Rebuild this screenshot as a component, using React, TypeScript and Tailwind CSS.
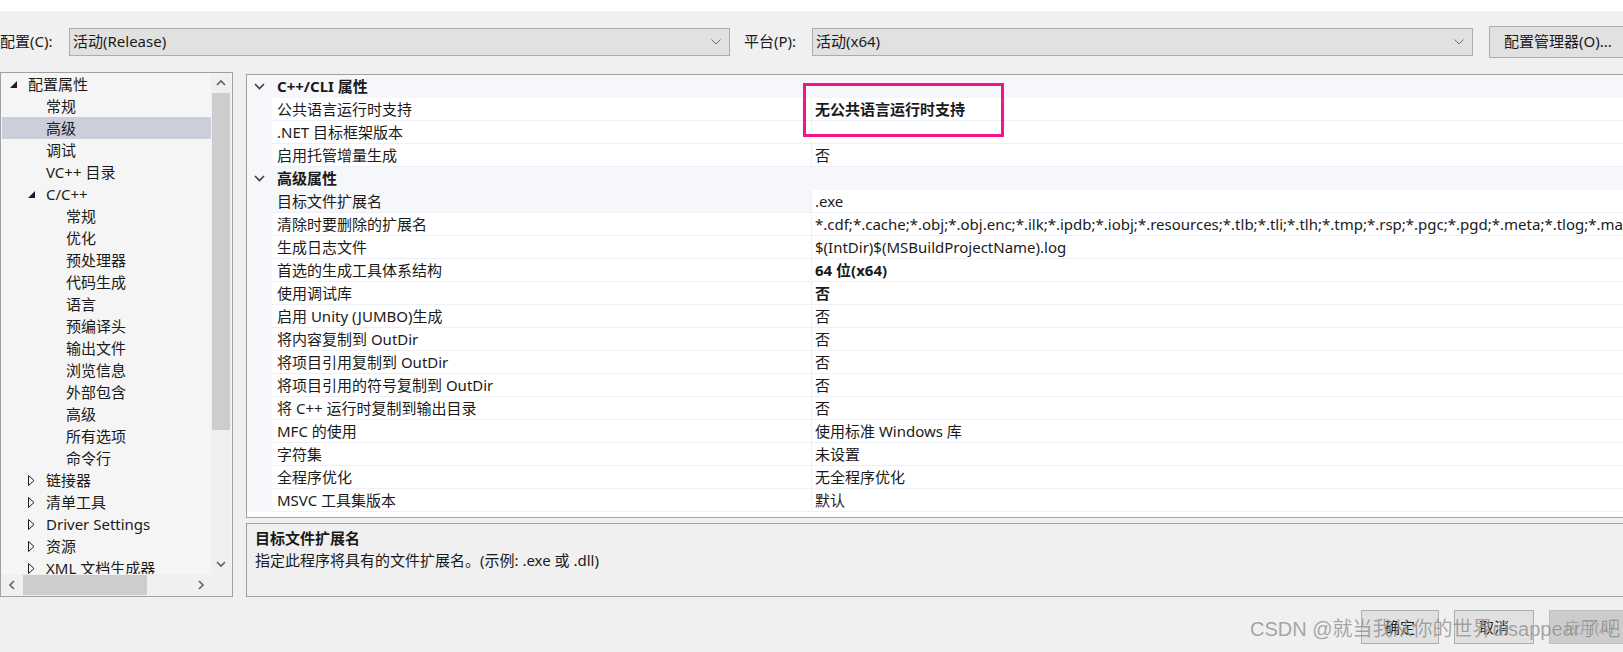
import React from 'react';

type TreeItem = {
  label: string;
  level: 0 | 1 | 2;
  toggle?: 'open' | 'closed';
  selected?: boolean;
};

const TREE: TreeItem[] = [
  { label: '配置属性', level: 0, toggle: 'open' },
  { label: '常规', level: 1 },
  { label: '高级', level: 1, selected: true },
  { label: '调试', level: 1 },
  { label: 'VC++ 目录', level: 1 },
  { label: 'C/C++', level: 1, toggle: 'open' },
  { label: '常规', level: 2 },
  { label: '优化', level: 2 },
  { label: '预处理器', level: 2 },
  { label: '代码生成', level: 2 },
  { label: '语言', level: 2 },
  { label: '预编译头', level: 2 },
  { label: '输出文件', level: 2 },
  { label: '浏览信息', level: 2 },
  { label: '外部包含', level: 2 },
  { label: '高级', level: 2 },
  { label: '所有选项', level: 2 },
  { label: '命令行', level: 2 },
  { label: '链接器', level: 1, toggle: 'closed' },
  { label: '清单工具', level: 1, toggle: 'closed' },
  { label: 'Driver Settings', level: 1, toggle: 'closed' },
  { label: '资源', level: 1, toggle: 'closed' },
  { label: 'XML 文档生成器', level: 1, toggle: 'closed' },
];

const INDENT = {
  0: 'pl-[8px]',
  1: 'pl-[26px]',
  2: 'pl-[46px]',
};

type GridRow =
  | { kind: 'header'; label: string }
  | { kind: 'prop'; name: string; value: string; bold?: boolean; selected?: boolean };

const ROWS: GridRow[] = [
  { kind: 'header', label: 'C++/CLI 属性' },
  { kind: 'prop', name: '公共语言运行时支持', value: '无公共语言运行时支持', bold: true },
  { kind: 'prop', name: '.NET 目标框架版本', value: '' },
  { kind: 'prop', name: '启用托管增量生成', value: '否' },
  { kind: 'header', label: '高级属性' },
  { kind: 'prop', name: '目标文件扩展名', value: '.exe', selected: true },
  {
    kind: 'prop',
    name: '清除时要删除的扩展名',
    value:
      '*.cdf;*.cache;*.obj;*.obj.enc;*.ilk;*.ipdb;*.iobj;*.resources;*.tlb;*.tli;*.tlh;*.tmp;*.rsp;*.pgc;*.pgd;*.meta;*.tlog;*.manifest;*.res;*.pch;*.exp;*.idb;*.rep;*.xdc;*.pdb;*_manifest.rc;*.bsc;*.sbr;*.xml',
  },
  { kind: 'prop', name: '生成日志文件', value: '$(IntDir)$(MSBuildProjectName).log' },
  { kind: 'prop', name: '首选的生成工具体系结构', value: '64 位(x64)', bold: true },
  { kind: 'prop', name: '使用调试库', value: '否', bold: true },
  { kind: 'prop', name: '启用 Unity (JUMBO)生成', value: '否' },
  { kind: 'prop', name: '将内容复制到 OutDir', value: '否' },
  { kind: 'prop', name: '将项目引用复制到 OutDir', value: '否' },
  { kind: 'prop', name: '将项目引用的符号复制到 OutDir', value: '否' },
  { kind: 'prop', name: '将 C++ 运行时复制到输出目录', value: '否' },
  { kind: 'prop', name: 'MFC 的使用', value: '使用标准 Windows 库' },
  { kind: 'prop', name: '字符集', value: '未设置' },
  { kind: 'prop', name: '全程序优化', value: '无全程序优化' },
  { kind: 'prop', name: 'MSVC 工具集版本', value: '默认' },
];

function SmallChevron({ dir, className }: { dir: 'up' | 'down' | 'left' | 'right'; className?: string }) {
  const d = {
    up: 'M1 6 L5 2 L9 6',
    down: 'M1 2 L5 6 L9 2',
    left: 'M6 1 L2 5 L6 9',
    right: 'M2 1 L6 5 L2 9',
  }[dir];
  const vertical = dir === 'up' || dir === 'down';
  return (
    <svg
      width={vertical ? 10 : 8}
      height={vertical ? 8 : 10}
      viewBox={vertical ? '0 0 10 8' : '0 0 8 10'}
      className={className}
    >
      <path d={d} stroke="#606060" strokeWidth="1.6" fill="none" />
    </svg>
  );
}

function ComboBox({ text }: { text: string }) {
  return (
    <div className="shrink-0 w-[661px] h-[28px] bg-[#e1e1e1] border border-[#adadad] flex items-center justify-between pl-[3px] pr-[8px]">
      <span>{text}</span>
      <svg width="10" height="6" viewBox="0 0 10 6">
        <path d="M0.5 0.5 L5 5 L9.5 0.5" stroke="#707070" strokeWidth="1" fill="none" />
      </svg>
    </div>
  );
}

function TreeToggle({ toggle }: { toggle?: 'open' | 'closed' }) {
  if (toggle === 'open') {
    return (
      <svg width="8" height="8" viewBox="0 0 8 8" className="mt-[2px]">
        <polygon points="7,0 7,7 0,7" fill="#1e1e1e" />
      </svg>
    );
  }
  if (toggle === 'closed') {
    return (
      <svg width="7" height="11" viewBox="0 0 7 11">
        <polygon points="0.5,0.5 6,5.5 0.5,10.5" fill="none" stroke="#1e1e1e" strokeWidth="1" />
      </svg>
    );
  }
  return null;
}

function Tree() {
  return (
    <div className="shrink-0 w-[233px] h-[525px] border border-[#a0a0a0] bg-[#f5f5f5] flex flex-col">
      <div className="flex h-[501px]">
        <div className="w-[210px] overflow-hidden pl-[1px]">
          {TREE.map((item, i) => (
            <div
              key={i}
              className={`h-[22px] flex items-center whitespace-nowrap ${INDENT[item.level]} ${
                item.selected ? 'bg-[#cccedb]' : ''
              }`}
            >
              <div className="w-[18px] flex items-center">
                <TreeToggle toggle={item.toggle} />
              </div>
              <span>{item.label}</span>
            </div>
          ))}
        </div>
        <div className="w-[20px] bg-[#f0f0f0] flex flex-col">
          <div className="h-[20px] flex items-center justify-center">
            <SmallChevron dir="up" />
          </div>
          <div className="h-[337px] bg-[#cdcdcd] mx-[1px]" />
          <div className="flex-1" />
          <div className="h-[20px] flex items-center justify-center">
            <SmallChevron dir="down" />
          </div>
        </div>
      </div>
      <div className="flex h-[22px] bg-[#f0f0f0]">
        <div className="w-[211px] flex items-center">
          <div className="w-[22px] flex items-center justify-center">
            <SmallChevron dir="left" />
          </div>
          <div className="w-[124px] h-[20px] bg-[#cdcdcd]" />
          <div className="flex-1" />
          <div className="w-[22px] flex items-center justify-center">
            <SmallChevron dir="right" />
          </div>
        </div>
      </div>
    </div>
  );
}

function PropertyGrid() {
  return (
    <div className="relative w-[1390px] h-[444px] border border-[#a0a0a0] bg-white overflow-hidden">
      {ROWS.map((row, i) =>
        row.kind === 'header' ? (
          <div key={i} className="h-[23px] flex items-center bg-[#f5f7fb]">
            <div className="w-[25px] flex items-center justify-center">
              <svg width="11" height="7" viewBox="0 0 11 7">
                <path d="M1 1 L5.5 5.5 L10 1" stroke="#3c3c3c" strokeWidth="1.6" fill="none" />
              </svg>
            </div>
            <span className="pl-[5px] font-bold">{row.label}</span>
          </div>
        ) : (
          <div key={i} className="h-[23px] flex bg-[#f5f7fb]">
            <div className="w-[25px]" />
            <div
              className={`w-[539px] flex items-center pl-[5px] border-b border-[#edf1f7] whitespace-nowrap ${
                row.selected ? 'bg-[#f5f7fb]' : 'bg-white'
              }`}
            >
              {row.name}
            </div>
            <div
              className={`flex-1 flex items-center pl-[3px] bg-white border-l border-b border-[#edf1f7] whitespace-nowrap overflow-hidden ${
                row.bold ? 'font-bold' : ''
              }`}
            >
              {row.value}
            </div>
          </div>
        )
      )}
      <div className="absolute left-[556px] top-[8px] w-[201px] h-[54px] border-[3px] border-[#f5128a]" />
    </div>
  );
}

export default function App() {
  return (
    <div className="relative w-[1623px] h-[652px] overflow-hidden bg-[#f0f0f0] text-[15px] text-[#1a1a1a] font-['Noto_Sans','Noto_Sans_CJK_SC',sans-serif]">
      <div className="h-[11px] bg-white" />

      {/* config / platform row */}
      <div className="h-[61px] flex items-center">
        <span className="shrink-0 w-[69px] whitespace-nowrap">配置(C):</span>
        <ComboBox text="活动(Release)" />
        <span className="shrink-0 w-[82px] pl-[14px] whitespace-nowrap">平台(P):</span>
        <ComboBox text="活动(x64)" />
        <button className="shrink-0 ml-[16px] w-[150px] h-[32px] bg-[#e1e1e1] border border-[#adadad] text-left pl-[14px] whitespace-nowrap">
          配置管理器(O)...
        </button>
      </div>

      <div className="flex h-[525px]">
        <Tree />
        <div className="shrink-0 ml-[13px] pt-[2px] flex flex-col">
          <PropertyGrid />
          <div className="mt-[5px] w-[1390px] h-[74px] border border-[#a0a0a0] bg-[#f0f0f0] pl-[8px] pt-[3px] leading-[22px]">
            <div className="font-bold">目标文件扩展名</div>
            <div>指定此程序将具有的文件扩展名。(示例: .exe 或 .dll)</div>
          </div>
        </div>
      </div>

      {/* dialog buttons */}
      <div className="h-[55px] flex items-start pt-[13px] pl-[1361px] gap-[15px]">
        <button className="shrink-0 w-[78px] h-[34px] bg-[#e1e1e1] border border-[#adadad]">确定</button>
        <button className="shrink-0 w-[80px] h-[34px] bg-[#e1e1e1] border border-[#adadad]">取消</button>
        <button className="shrink-0 w-[80px] h-[34px] bg-[#cccccc] border border-[#bfbfbf] text-[#a0a0a0] whitespace-nowrap">
          应用(A)
        </button>
      </div>

      {/* watermark */}
      <div className="absolute left-[1250px] top-[616px] text-[20px] leading-[26px] text-[#8a8a8a] opacity-75 whitespace-nowrap font-['Liberation_Sans','Noto_Sans_CJK_SC',sans-serif] [text-shadow:0_0_1px_#ffffff]">
        CSDN @就当我从你的世界disappear了吧
      </div>
    </div>
  );
}
